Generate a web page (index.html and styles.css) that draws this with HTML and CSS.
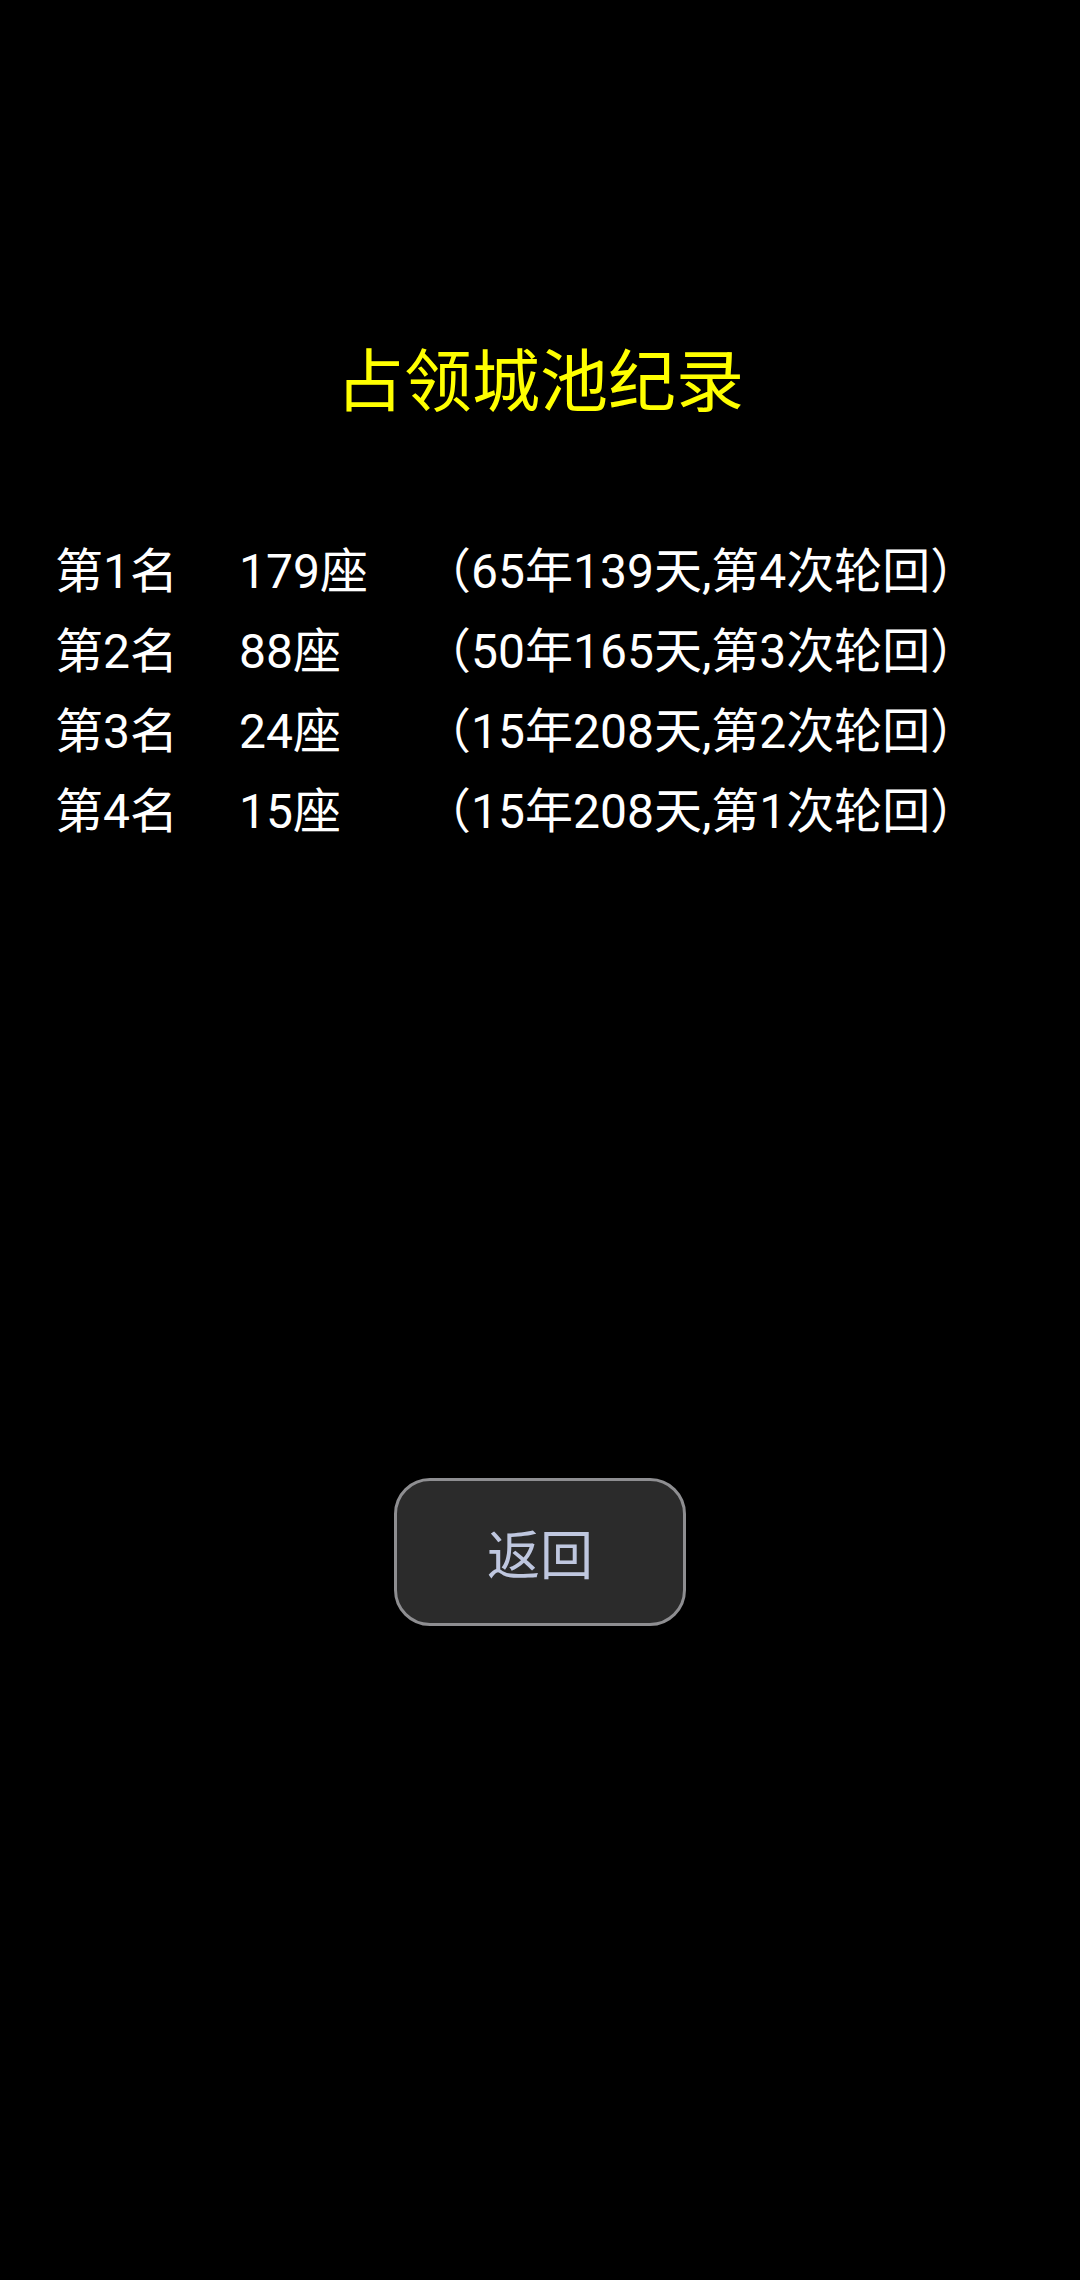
FILE: index.html
```html
<!DOCTYPE html>
<html lang="zh-CN">
<head>
    <meta charset="UTF-8">
    <meta name="viewport" content="width=device-width, initial-scale=1.0">
    <title>占领城池纪录</title>
    <link rel="stylesheet" href="styles.css">
</head>
<body>
    <div class="screen">
        <h1 class="title">占领城池纪录</h1>
        <div class="records">
            <div class="record">
                <span class="rank">第1名</span>
                <span class="count">179座</span>
                <span class="detail">（65年139天,第4次轮回）</span>
            </div>
            <div class="record">
                <span class="rank">第2名</span>
                <span class="count">88座</span>
                <span class="detail">（50年165天,第3次轮回）</span>
            </div>
            <div class="record">
                <span class="rank">第3名</span>
                <span class="count">24座</span>
                <span class="detail">（15年208天,第2次轮回）</span>
            </div>
            <div class="record">
                <span class="rank">第4名</span>
                <span class="count">15座</span>
                <span class="detail">（15年208天,第1次轮回）</span>
            </div>
        </div>
        <div class="actions">
            <button class="back-btn">返回</button>
        </div>
    </div>
</body>
</html>
```

FILE: styles.css
```css
body {
    margin: 0;
    background-color: #000;
    font-family: Roboto, "Noto Sans CJK SC", sans-serif;
    color: #fff;
}
.screen {
    width: 1080px;
    height: 2280px;
    padding-top: 343px;
    box-sizing: border-box;
}
.title {
    margin: 0;
    font-size: 68px;
    font-weight: normal;
    line-height: 80px;
    color: #ffff00;
    text-align: center;
}
.records {
    margin-top: 109px;
    padding-left: 55px;
}
.record {
    display: grid;
    grid-template-columns: 184px 184px auto;
    font-size: 48px;
    line-height: 80px;
    height: 80px;
}
.actions {
    display: flex;
    justify-content: center;
    margin-top: 626px;
}
.back-btn {
    width: 292px;
    height: 148px;
    background-color: #2b2b2b;
    border: 3px solid #8e8e91;
    border-radius: 36px;
    color: #bfc7df;
    font-family: Roboto, "Noto Sans CJK SC", sans-serif;
    font-size: 53px;
    cursor: pointer;
}
```
